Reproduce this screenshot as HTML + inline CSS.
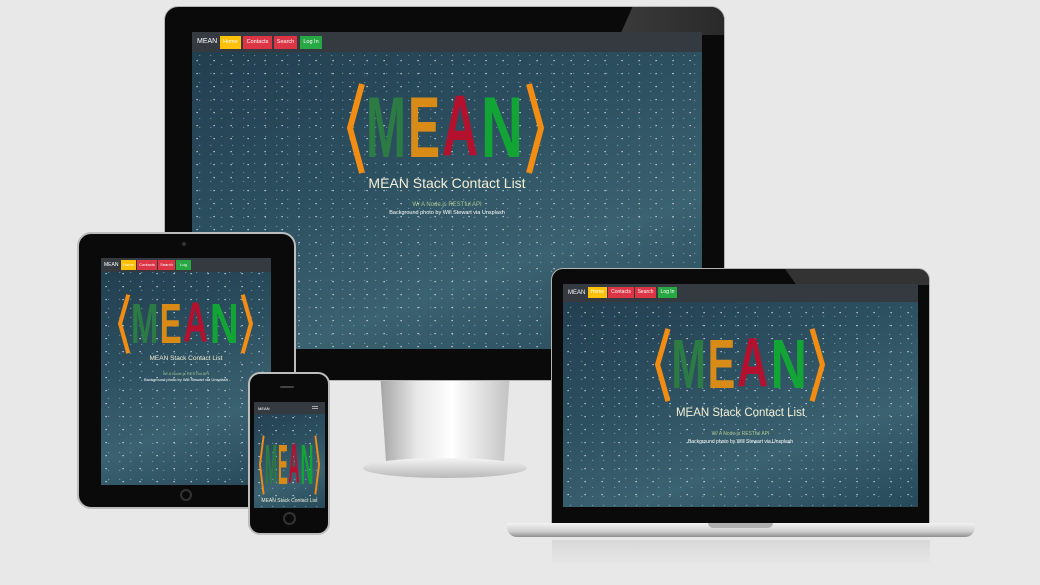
<!DOCTYPE html>
<html><head><meta charset="utf-8"><style>
*{margin:0;padding:0;box-sizing:border-box}
body{width:1040px;height:585px;background:#e8e8e8;position:relative;overflow:hidden;font-family:"Liberation Sans",sans-serif}
.a{position:absolute}
.sky{position:absolute;overflow:hidden;background:
radial-gradient(circle at 30% 20%,rgba(255,255,255,.8) 0 .5px,transparent .9px) 0 0/17px 13px,
radial-gradient(circle at 70% 60%,rgba(200,225,255,.45) 0 .4px,transparent .8px) 0 0/11px 9px,
linear-gradient(160deg,#213d4d 0%,#2c4f60 40%,#3b6270 70%,#27495a 100%)}
.nav{position:absolute;left:0;top:0;right:0;background:#343a40;color:#fff}
.b{position:absolute;color:#fff;text-align:center}
.y{background:#ffc107}.r{background:#dc3545}.g{background:#28a745}
.t{position:absolute;left:0;right:0;text-align:center}
.frame{position:absolute;background:#0a0a0a;border:1px solid #b5b5b5}
</style></head><body>
<svg width="0" height="0" style="position:absolute"><defs>
<g id="logo">
<polyline points="15,1 3,45 15,90" fill="none" stroke="#f28c13" stroke-width="6"/>
<polyline points="182,1 194,45 182,90" fill="none" stroke="#f28c13" stroke-width="6"/>
<text x="19" y="74" font-family="Liberation Sans" font-weight="bold" font-size="86" fill="#2c7a44" textLength="40" lengthAdjust="spacingAndGlyphs">M</text>
<text x="61" y="74" font-family="Liberation Sans" font-weight="bold" font-size="86" fill="#d98b18" textLength="32" lengthAdjust="spacingAndGlyphs">E</text>
<text x="95" y="72" font-family="Liberation Sans" font-weight="bold" font-size="86" fill="#b4112f" textLength="36" lengthAdjust="spacingAndGlyphs">A</text>
<text x="134" y="74" font-family="Liberation Sans" font-weight="bold" font-size="86" fill="#12a535" textLength="42" lengthAdjust="spacingAndGlyphs">N</text>
</g></defs></svg>

<!-- MONITOR -->
<div class="a" style="left:375px;top:380px;width:140px;height:85px;background:linear-gradient(90deg,#9a9a9a,#e8e8e8 30%,#fff 55%,#bdbdbd);clip-path:polygon(4% 0,96% 0,92% 100%,8% 100%)"></div>
<div class="a" style="left:363px;top:458px;width:164px;height:20px;border-radius:50%;background:linear-gradient(#f4f4f4,#b8b8b8)"></div>
<div class="frame" style="left:164px;top:6px;width:561px;height:375px;border-radius:14px 14px 0 0"></div>
<div class="a" style="left:620px;top:7px;width:104px;height:28px;background:linear-gradient(90deg,#3a3a3a,#2a2a2a);clip-path:polygon(12% 0,100% 0,100% 100%,0 100%);border-radius:0 13px 0 0"></div>
<div class="sky" style="left:192px;top:32px;width:510px;height:317px">
 <div class="nav" style="height:20px;font-size:7px">
  <span class="a" style="left:5px;top:6px">MEAN</span>
  <div class="b y" style="left:28px;top:4px;width:21px;height:13px;font-size:5.5px;line-height:13px">Home</div>
  <div class="b r" style="left:51px;top:4px;width:29px;height:13px;font-size:5.5px;line-height:13px">Contacts</div>
  <div class="b r" style="left:82px;top:4px;width:23px;height:13px;font-size:5.5px;line-height:13px">Search</div>
  <div class="b g" style="left:108px;top:4px;width:22px;height:13px;font-size:5.5px;line-height:13px">Log In</div>
 </div>
 <svg class="a" style="left:155px;top:51px" width="197" height="91" viewBox="0 0 197 91"><use href="#logo"/></svg>
 <div class="t" style="top:143px;font-size:14px;color:#f3efd6">MEAN Stack Contact List</div>
 <div class="t" style="top:170px;font-size:6px;color:#a9c48e">W/ A Node.js RESTful API</div>
 <div class="t" style="top:178px;font-size:5.5px;color:#fff">Background photo by Will Stewart via Unsplash</div>
</div>

<!-- TABLET -->
<div class="frame" style="left:77px;top:232px;width:219px;height:277px;border-radius:14px;border:2px solid #bdbdbd"></div>
<div class="a" style="left:182px;top:242px;width:4px;height:4px;border-radius:50%;background:#333"></div>
<div class="a" style="left:180px;top:489px;width:12px;height:12px;border-radius:50%;border:2px solid #333"></div>
<div class="sky" style="left:101px;top:258px;width:170px;height:227px">
 <div class="nav" style="height:14px;font-size:5px">
  <span class="a" style="left:3px;top:4px">MEAN</span>
  <div class="b y" style="left:20px;top:2px;width:15px;height:10px;font-size:4px;line-height:10px">Home</div>
  <div class="b r" style="left:36px;top:2px;width:20px;height:10px;font-size:4px;line-height:10px">Contacts</div>
  <div class="b r" style="left:57px;top:2px;width:17px;height:10px;font-size:4px;line-height:10px">Search</div>
  <div class="b g" style="left:75px;top:2px;width:15px;height:10px;font-size:4px;line-height:10px">Log</div>
 </div>
 <svg class="a" style="left:17px;top:36px" width="135" height="60" viewBox="0 0 197 91" preserveAspectRatio="none"><use href="#logo"/></svg>
 <div class="t" style="top:97px;font-size:6.5px;color:#f3efd6">MEAN Stack Contact List</div>
 <div class="t" style="top:113px;font-size:4px;color:#a9c48e">W/ A Node.js RESTful API</div>
 <div class="t" style="top:119px;font-size:4px;color:#fff">Background photo by Will Stewart via Unsplash</div>
</div>

<!-- PHONE -->
<div class="frame" style="left:248px;top:372px;width:82px;height:163px;border-radius:12px;border:2px solid #bdbdbd"></div>
<div class="a" style="left:280px;top:386px;width:14px;height:2px;background:#444;border-radius:1px"></div>
<div class="a" style="left:283px;top:512px;width:13px;height:13px;border-radius:50%;border:2px solid #333"></div>
<div class="sky" style="left:254px;top:402px;width:71px;height:106px">
 <div class="nav" style="height:12px;font-size:4px">
  <span class="a" style="left:4px;top:4px">MEAN</span>
  <div class="a" style="left:58px;top:4px;width:6px;height:1px;background:#aaa;box-shadow:0 2px 0 #aaa"></div>
 </div>
 <svg class="a" style="left:5px;top:33px" width="61" height="60" viewBox="0 0 197 91" preserveAspectRatio="none"><use href="#logo"/></svg>
 <div class="t" style="top:96px;font-size:5px;color:#f3efd6">MEAN Stack Contact List</div>
</div>

<!-- LAPTOP -->
<div class="frame" style="left:551px;top:268px;width:379px;height:256px;border-radius:12px 12px 0 0"></div>
<div class="a" style="left:785px;top:269px;width:144px;height:16px;background:#333;clip-path:polygon(0 0,100% 0,100% 100%,8% 100%);border-radius:0 11px 0 0"></div>
<div class="sky" style="left:563px;top:284px;width:355px;height:223px">
 <div class="nav" style="height:18px;font-size:6px">
  <span class="a" style="left:5px;top:6px">MEAN</span>
  <div class="b y" style="left:25px;top:3px;width:19px;height:11px;font-size:5px;line-height:11px">Home</div>
  <div class="b r" style="left:45px;top:3px;width:26px;height:11px;font-size:5px;line-height:11px">Contacts</div>
  <div class="b r" style="left:72px;top:3px;width:21px;height:11px;font-size:5px;line-height:11px">Search</div>
  <div class="b g" style="left:95px;top:3px;width:19px;height:11px;font-size:5px;line-height:11px">Log In</div>
 </div>
 <svg class="a" style="left:92px;top:44px" width="170" height="74" viewBox="0 0 197 91" preserveAspectRatio="none"><use href="#logo"/></svg>
 <div class="t" style="top:123px;font-size:11.5px;color:#f3efd6">MEAN Stack Contact List</div>
 <div class="t" style="top:147px;font-size:5px;color:#a9c48e">W/ A Node.js RESTful API</div>
 <div class="t" style="top:155px;font-size:5px;color:#fff">Background photo by Will Stewart via Unsplash</div>
</div>
<div class="a" style="left:507px;top:523px;width:468px;height:14px;border-radius:2px 2px 10px 10px;background:linear-gradient(#f2f2f2,#cfcfcf 60%,#8f8f8f)"></div>
<div class="a" style="left:708px;top:523px;width:65px;height:5px;border-radius:0 0 5px 5px;background:#b0b0b0"></div>
<div class="a" style="left:552px;top:540px;width:378px;height:25px;background:linear-gradient(rgba(200,200,200,.5),rgba(232,232,232,0))"></div>
</body></html>
